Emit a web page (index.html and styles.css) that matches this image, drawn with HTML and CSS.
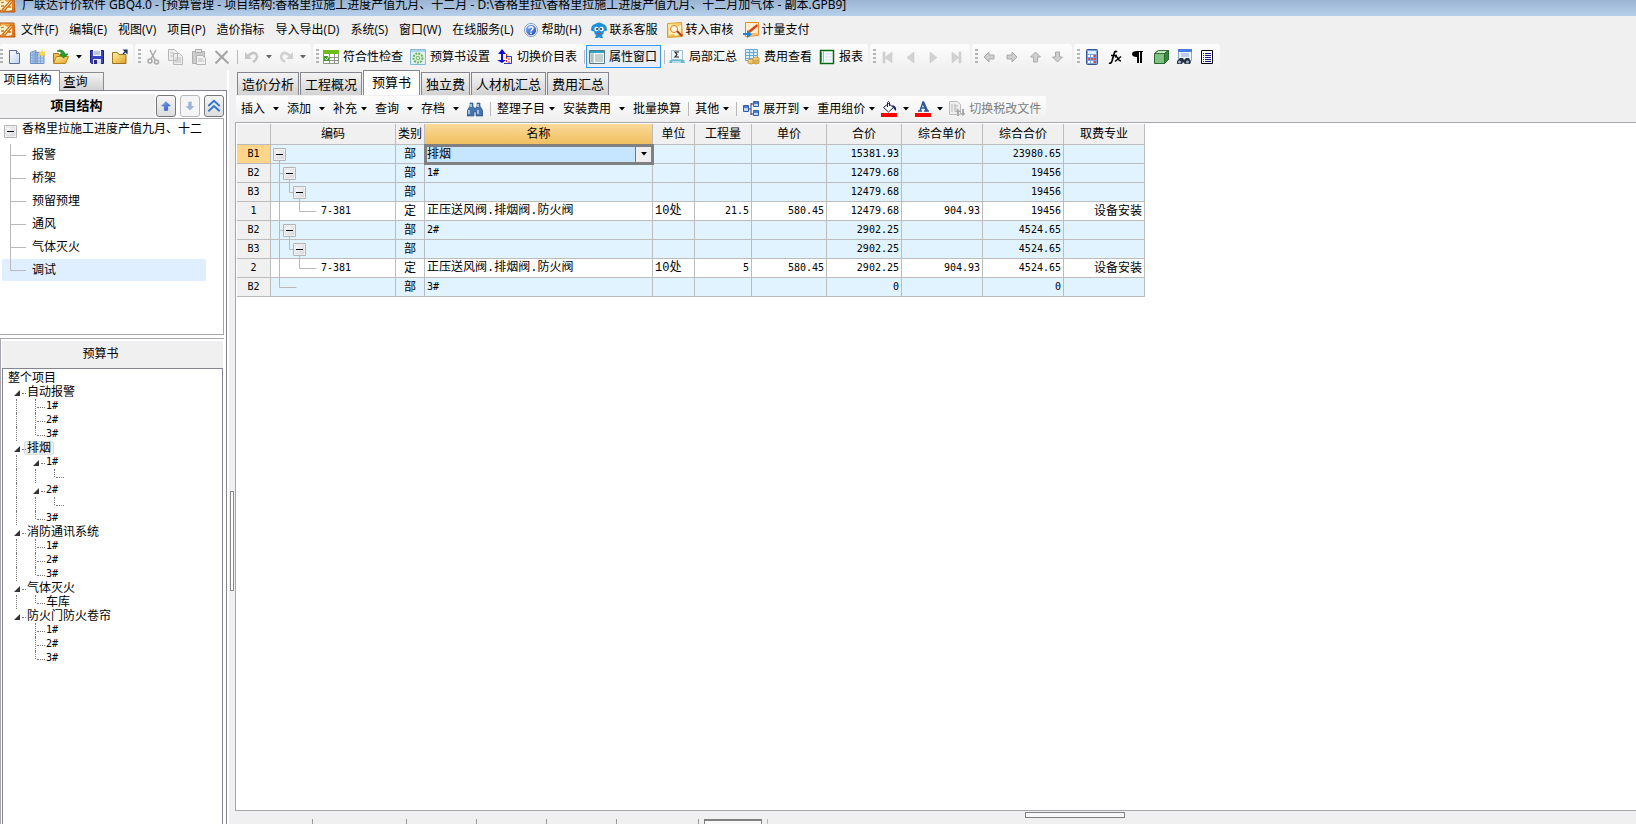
FILE: index.html
```
<!DOCTYPE html>
<html lang="zh-CN">
<head>
<meta charset="utf-8">
<title>广联达计价软件 GBQ4.0</title>
<link rel="stylesheet" href="styles.css">
</head>
<body>
<svg class="defs" aria-hidden="true">
  <linearGradient id="paper" x2="1" y2="1"><stop offset="0" stop-color="#fff"/><stop offset="1" stop-color="#bcd3ee"/></linearGradient>
  <linearGradient id="gold" y2="1"><stop offset="0" stop-color="#fff0a0"/><stop offset="1" stop-color="#e0a126"/></linearGradient>
  <linearGradient id="orange" x2="1" y2="1"><stop offset="0" stop-color="#f9c152"/><stop offset="1" stop-color="#d8640e"/></linearGradient>
  <linearGradient id="blue" y2="1"><stop offset="0" stop-color="#8db8f5"/><stop offset="1" stop-color="#1b47c0"/></linearGradient>
  <linearGradient id="silver" x2="1" y2="1"><stop offset="0" stop-color="#fff"/><stop offset="1" stop-color="#d5d5dc"/></linearGradient>
  <symbol id="app" viewBox="0 0 16 16"><path d="M0 1h14l1 14H0z" fill="url(#orange)" stroke="#c35a10"/><path d="M0 4l4-1 3 2 5-2v10l-5 1-3-2-4 1z" fill="#fff2cf"/><path d="M2 13L11 3l2 1-8 9M1 6l3-1M1 9h3M8 10h3" fill="none" stroke="#d07113" stroke-width="1.3"/></symbol>
  <symbol id="down" viewBox="0 0 6 4"><path d="M0 0h6L3 3.5z" fill="#000"/></symbol>
  <symbol id="downg" viewBox="0 0 6 4"><path d="M0 0h6L3 3.5z" fill="#666"/></symbol>
  <symbol id="box" viewBox="0 0 13 13"><path d="M.5 .5h12v12H.5z" fill="#fff" stroke="#b4b4b4"/><path d="M2 2h9v9H2z" fill="url(#silver)" stroke="#ddd"/><path d="M3 6.5h7" stroke="#000"/></symbol>
</svg>

<header class="titlebar">
  <svg class="icon"><use href="#app"/></svg>
  <span>广联达计价软件 GBQ4.0 - [预算管理 - 项目结构:香格里拉施工进度产值九月、十二月 - D:\香格里拉\香格里拉施工进度产值九月、十二月加气体 - 副本.GPB9]</span>
</header>

<nav class="menubar">
  <svg class="icon"><use href="#app"/></svg>
  <button>文件(F)</button><button>编辑(E)</button><button>视图(V)</button><button>项目(P)</button><button>造价指标</button><button>导入导出(D)</button><button>系统(S)</button><button>窗口(W)</button><button>在线服务(L)</button>
  <button class="with-icon"><svg class="icon" viewBox="0 0 16 16"><circle cx="8" cy="8" r="6.5" fill="#fff" stroke="#7c98c8"/><circle cx="8" cy="8" r="5.2" fill="url(#blue)"/><path d="M6 6.5C6 4 10 4 10 6.5 10 8 8 8 8 9.5M8 10.5v1.5" fill="none" stroke="#fff" stroke-width="1.5"/></svg>帮助(H)</button>
  <button class="with-icon"><svg class="icon" viewBox="0 0 16 16"><path d="M4 2Q8-1 12 2q4 1 4 6-1 2-3 1 0 3-2 4l1 3H9l-1-1-1 1H4l1-3q-2-1-2-4-2 1-3-1 0-5 4-6z" fill="#2091dc"/><circle cx="5.500" cy="7" r="2.200" fill="#fff"/><circle cx="10.500" cy="7" r="2.200" fill="#fff"/><circle cx="6" cy="7" r="1" fill="#123"/><circle cx="10" cy="7" r="1" fill="#123"/><path d="M6 11q2 2 4 0" stroke="#c33" fill="none"/></svg>联系客服</button>
  <button class="with-icon"><svg class="icon" viewBox="0 0 16 16"><path d="M.5 1.500l14-1 1 14-15 1z" fill="url(#gold)" stroke="#e0a030"/><path d="M2 4l4-1 3 2 5-2v9l-5 2-3-2-4 1z" fill="#fff0c0"/><circle cx="7" cy="7" r="3.500" fill="#fff8e0" stroke="#dc7b29"/><path d="M10 9l5 5" stroke="#b33a20" stroke-width="2"/></svg>转入审核</button>
  <button class="with-icon"><svg class="icon" viewBox="0 0 16 16"><path d="M2.500.5h13v13l-13 1z" fill="#fff0cc" stroke="#e58a25"/><path d="M5 9L14 2l1 2-8 7z" fill="#d9411d"/><path d="M8 12h6" stroke="#e58a25"/><path d="M0 11h4V8l5 4.500-5 3.500v-3H0z" fill="#1587d7"/></svg>计量支付</button>
</nav>

<div class="toolbars">
  <div class="group first">
    <i class="grip"></i>
    <button aria-label="新建"><svg class="icon" viewBox="0 0 16 16"><path d="M2.500 1.500h7l3 3v10h-10z" fill="url(#paper)" stroke="#5b6f92"/><path d="M9.500 1.500v3h3" fill="#dce8f7" stroke="#5b6f92"/></svg></button>
    <button aria-label="新建项目"><svg class="icon" viewBox="0 0 16 16"><path d="M.5 3.500L6 1.500v13H.5zM5 3.500h9v11H5z" fill="#b7d0ef" stroke="#6c91c4"/><path d="M1 6h13M1 9h13M1 12h13M7.500 4v10M10.500 4v10M3 3v11" stroke="#7ea4d4"/><path d="M12 0l1 3 3-1-2 2.500 2 2.500-3-1-1 3-1-3-3 1 2-2.500L8 2l3 1z" fill="#ffd83c"/></svg></button>
    <button aria-label="打开"><svg class="icon" viewBox="0 0 16 16"><path d="M.5 13.500v-9h5l1 2h6v7z" fill="#eebf4b" stroke="#a87516"/><path d="M.5 14.500l3-7h12l-3 7z" fill="url(#gold)" stroke="#b98618"/><path d="M4 2q6-3 8 3h3l-4.500 4L7 5h2q-1-3-5-3z" fill="#23a12b" stroke="#137018" stroke-width=".6"/></svg></button>
    <svg class="arrow"><use href="#down"/></svg>
    <button aria-label="保存"><svg class="icon" viewBox="0 0 16 16"><path d="M1.500 1.500h13v13h-12l-1-1z" fill="#3943bd" stroke="#1a1f78"/><path d="M4 1h8v6H4z" fill="#f2f4fa"/><path d="M5 3h6M5 5h6" stroke="#8e95b8"/><path d="M4 10h8v5H4z" fill="#dfe2ed"/><path d="M5 11h3v4H5z" fill="#262b80"/></svg></button>
    <button aria-label="关闭"><svg class="icon" viewBox="0 0 16 16"><path d="M.5 14.500v-11h5l1.500 2h7v9z" fill="url(#gold)" stroke="#9b7421"/><path d="M11 5l3-3M12 1h3v3z" fill="#17345c" stroke="#17345c" stroke-width="1.200"/></svg></button>
  </div>
  <div class="group">
    <i class="grip"></i>
    <button disabled aria-label="剪切"><svg class="icon" viewBox="0 0 16 16"><path d="M5 1l5 10M11 1L6 10" stroke="#aaa" stroke-width="1.500"/><g fill="none" stroke="#a8a8a8" stroke-width="1.500"><circle cx="5" cy="12" r="2"/><circle cx="11.500" cy="13" r="2"/></g></svg></button>
    <button disabled aria-label="复制"><svg class="icon" viewBox="0 0 16 16"><path d="M.5.5h6l3 3v8h-9zM5.500 4.500h6l3 3v8h-9z" fill="#eee" stroke="#b8b8b8"/><path d="M2 4h4M2 7h3M7 9h6M7 11h6M7 13h6" stroke="#c0c0c0"/></svg></button>
    <button disabled aria-label="粘贴"><svg class="icon" viewBox="0 0 16 16"><path d="M1.500 2.500h12v12h-12z" fill="#ccc" stroke="#b0b0b0"/><path d="M4.500.5h6v3h-6z" fill="#e8e8e8" stroke="#aaa"/><path d="M5.500 6.500h6l3 3v6h-9z" fill="#f3f3f3" stroke="#b4b4b4"/><path d="M7 10h5M7 12h6" stroke="#bbb"/></svg></button>
    <button disabled aria-label="删除"><svg class="icon" viewBox="0 0 16 16"><path d="M1.500 2l13 12.500M13.500 2L1.500 14.500" stroke="#a4a4a4" stroke-width="2"/></svg></button>
    <i class="sep"></i>
    <span class="split"><button disabled aria-label="撤销"><svg class="icon" viewBox="0 0 16 16"><path d="M3 7q5-5 8-2 3 4-3 8" fill="none" stroke="#c6c6c6" stroke-width="2.500"/><path d="M0 3v7h7z" fill="#c6c6c6"/></svg></button><svg class="arrow"><use href="#downg"/></svg></span>
    <span class="split"><button disabled aria-label="恢复"><svg class="icon" viewBox="0 0 16 16"><path d="M11 7Q6 2 3 5q-3 4 3 8" fill="none" stroke="#d0d0d0" stroke-width="2.500"/><path d="M14 3v7H7z" fill="#d0d0d0"/></svg></button><svg class="arrow"><use href="#downg"/></svg></span>
  </div>
  <div class="group">
    <i class="grip"></i>
    <button class="with-icon"><svg class="icon" viewBox="0 0 16 16"><path d="M.5 1.500h15v13H.5z" fill="#fff" stroke="#8b9a80"/><path d="M0 1h16v4H0z" fill="#6fbd19"/><path d="M0 8.500h16M0 11.500h16M6.500 5v10M11.500 5v10" stroke="#8a9385"/><path d="M1 7h5v5H1z" fill="#3e9b20"/><path d="M2 9l1.500 2L6 7" fill="none" stroke="#fff"/></svg>符合性检查</button>
    <button class="with-icon"><svg class="icon" viewBox="0 0 16 16"><path d="M.5.5h15v15H.5z" fill="#e3f1f6" stroke="#83b8d4"/><path d="M1 1h14v2H1z" fill="#a9d4e9"/><circle cx="8" cy="9" r="4.500" fill="#e7f5df" stroke="#6ab45a" stroke-width="2" stroke-dasharray="2 1"/><circle cx="8" cy="9" r="1.800" fill="#fff" stroke="#6ab45a"/></svg>预算书设置</button>
    <button class="with-icon"><svg class="icon" viewBox="0 0 16 16"><path d="M5 0l4 5H6v6h3l-4 3-5-3h4V5H1z" fill="#1010d0"/><path d="M9 7.500h5.500v7H7" fill="none" stroke="#2733ba"/><path d="M9.500 13V5M12 14V8" stroke="#d22" stroke-dasharray="2 1"/></svg>切换价目表</button>
    <i class="sep"></i>
    <button class="with-icon pressed"><svg class="icon" viewBox="0 0 16 16"><path d="M.5 1.500h15v13H.5z" fill="#f2f7fa" stroke="#59757e"/><path d="M1 2h14v2H1z" fill="#2ba5c9"/><path d="M1 4h4v10H1z" fill="#c5d9cd"/><path d="M2 6h2M2 8h2M2 10h2M2 12h2M6 6h8M6 8h8M6 10h8M6 12h8" stroke="#91aaa3"/></svg>属性窗口</button>
    <i class="sep short"></i>
    <button class="with-icon"><svg class="icon" viewBox="0 0 16 16"><path d="M2.500 1.500h11v9h-11z" fill="#ecf7fa" stroke="#a3c3ce"/><path d="M10 3H6l2 2.500L6 8h4" fill="none" stroke="#222" stroke-width="1.200"/><path d="M1 11h14l1 3H0z" fill="#65bbd1"/><path d="M3 13h9" stroke="#fff"/></svg>局部汇总</button>
    <button class="with-icon"><svg class="icon" viewBox="0 0 16 16"><path d="M1.500.5h12v11h-12z" fill="#d6edfa" stroke="#68a8d3"/><path d="M1 3.500h12M1 6.500h12M1 9.500h12M5.500 1v10M9.500 1v10" stroke="#68a8d3"/><path d="M4 11q3-2 6 0v3q-3 2-6 0zM9 9q3-2 6 0v5q-3 2-6 0z" fill="url(#gold)" stroke="#cda050"/><path d="M9 11q3 2 6 0" fill="none" stroke="#cda050"/></svg>费用查看</button>
    <button class="with-icon"><svg class="icon" viewBox="0 0 16 16"><path d="M1.500 1.500h13v13h-13z" fill="#f5faff" stroke="#08680f" stroke-width="1.500"/><path d="M4.500 2v12" stroke="#aac"/><path d="M6 5h7M6 8h7M6 11h7" stroke="#cddcf0"/><path d="M2 4h1M2 6h1M2 8h1M2 10h1M2 12h1" stroke="#222"/></svg>报表</button>
  </div>
  <div class="group">
    <i class="grip"></i>
    <button disabled aria-label="首条"><svg class="icon pale" viewBox="0 0 16 16"><path d="M3 3h2v11H3zM12 3v11L5 8.500z"/></svg></button>
    <button disabled aria-label="上一条"><svg class="icon pale" viewBox="0 0 16 16"><path d="M11 3v11L4 8.500z"/></svg></button>
    <button disabled aria-label="下一条"><svg class="icon pale" viewBox="0 0 16 16"><path d="M4 3v11l7-5.500z"/></svg></button>
    <button disabled aria-label="末条"><svg class="icon pale" viewBox="0 0 16 16"><path d="M3 3v11l7-5.500zM10 3h2v11h-2z"/></svg></button>
  </div>
  <div class="group">
    <i class="grip"></i>
    <button disabled aria-label="左移"><svg class="icon gray" viewBox="0 0 16 16"><path d="M2 8l5-5v3h5v4H7v3z"/></svg></button>
    <button disabled aria-label="右移"><svg class="icon gray" viewBox="0 0 16 16"><path d="M12 8L7 3v3H2v4h5v3z"/></svg></button>
    <button disabled aria-label="上移"><svg class="icon gray" viewBox="0 0 16 16"><path d="M7.500 3l5 5h-3v5h-4V8h-3z"/></svg></button>
    <button disabled aria-label="下移"><svg class="icon gray" viewBox="0 0 16 16"><path d="M6.500 13l5-5h-3V3h-4v5h-3z"/></svg></button>
  </div>
  <div class="group">
    <i class="grip"></i>
    <button aria-label="计算器"><svg class="icon" viewBox="0 0 16 16"><rect x="2.500" y=".5" width="11" height="15" rx="1" fill="#7ba4e3" stroke="#365292"/><path d="M4 2h8v3H4z" fill="#dfeffa"/><path d="M4 6h2v2H4zM7 6h2v2H7zM4 12h2v2H4zM7 12h2v2H7z" fill="#fff"/><path d="M10 6h2v2h-2zM4 9h2v2H4zM7 9h2v2H7zM10 9h2v2h-2zM10 12h2v2h-2z" fill="#d54c55"/></svg></button>
    <button aria-label="函数"><svg class="icon" viewBox="0 0 16 16"><path d="M10 3Q8 1 7 5L5 12q-1 3-3 2M4 6.500h6" fill="none" stroke="#000" stroke-width="1.700"/><path d="M8 8q2-1 3 1.500t3 2.500M14 7.500L8 12.500" fill="none" stroke="#000" stroke-width="1.500"/></svg></button>
    <button aria-label="段落"><svg class="icon" viewBox="0 0 16 16"><path d="M7 2h6v1h-1v11h-2V3H9v11H7V8Q2 8 2 5t5-3z" fill="#000"/></svg></button>
    <button aria-label="图元"><svg class="icon" viewBox="0 0 16 16"><path d="M1.500 4.500l4-3h10v9l-4 4h-10z" fill="#80c080" stroke="#276b31"/><path d="M1.500 4.500l4-3h10l-4 3z" fill="#c4e8bc" stroke="#39713b"/><path d="M11.500 4.500v10l4-4v-9z" fill="#388346" stroke="#276b31"/></svg></button>
    <button aria-label="查找表"><svg class="icon" viewBox="0 0 16 16"><path d="M2.500.5h13v11h-13z" fill="#eaf2ff" stroke="#8aa6de"/><path d="M2 0h14v3H2z" fill="#477de0"/><path d="M5 5h8M5 7h8" stroke="#8fa9dd"/><path d="M1 12l3-3h3l1 2 2-2h3l2 4-1 2H9l-2-2-1 2H1z" fill="#29323e"/><circle cx="3.500" cy="13" r="1.500" fill="#9db5d2"/><circle cx="11.500" cy="13" r="1.500" fill="#9db5d2"/></svg></button>
    <button aria-label="列表"><svg class="icon" viewBox="0 0 16 16"><path d="M2.500 1.500h11v13h-11z" fill="#fff" stroke="#000"/><path d="M4 4.500h1M6 4.500h6M4 6.500h1M6 6.500h6M4 8.500h1M6 8.500h6M4 10.500h1M6 10.500h6M4 12.500h1M6 12.500h6" stroke="#161b8e"/></svg></button>
  </div>
</div>

<div class="workspace">
  <aside class="side">
    <div class="side-tabs"><button class="side-tab active">项目结构</button><button class="side-tab"><u>查</u>询</button></div>
    <div class="side-body">
      <div class="side-head">
        <h2>项目结构</h2>
        <button aria-label="上移"><svg viewBox="0 0 16 16"><path d="M8 3l5 5h-3v5H6V8H3z" fill="url(#blue)" stroke="#315cc0" stroke-width=".6"/></svg></button>
        <button class="dim" aria-label="下移"><svg viewBox="0 0 16 16"><path d="M8 13l5-5h-3V3H6v5H3z" fill="#9eb4dc"/></svg></button>
        <button aria-label="折叠"><svg viewBox="0 0 16 16"><path d="M1.500 8L8 2l6.500 6M1.500 14L8 8l6.500 6" fill="none" stroke="#2c74cf" stroke-width="2"/></svg></button>
      </div>
      <ul class="project">
        <li class="root"><svg class="toggle"><use href="#box"/></svg>香格里拉施工进度产值九月、十二</li>
        <li>报警</li><li>桥架</li><li>预留预埋</li><li>通风</li><li>气体灭火</li><li class="selected">调试</li>
      </ul>
      <section class="book">
        <h3>预算书</h3>
        <div class="outline">
          <div class="node">整个项目</div>
          <div class="node"><i class="a"></i><b>自动报警</b></div>
          <div class="node"><i class="v"></i><i class="t"></i><b class="num">1#</b></div>
          <div class="node"><i class="v"></i><i class="t"></i><b class="num">2#</b></div>
          <div class="node"><i class="v"></i><i class="l"></i><b class="num">3#</b></div>
          <div class="node"><i class="a"></i><b class="current">排烟</b></div>
          <div class="node"><i class="v"></i><i class="a"></i><b class="num">1#</b></div>
          <div class="node"><i class="v"></i><i class="v"></i><i class="l"></i></div>
          <div class="node"><i class="v"></i><i class="a"></i><b class="num">2#</b></div>
          <div class="node"><i class="v"></i><i class="v"></i><i class="l"></i></div>
          <div class="node"><i class="v"></i><i class="l"></i><b class="num">3#</b></div>
          <div class="node"><i class="a"></i><b>消防通讯系统</b></div>
          <div class="node"><i class="v"></i><i class="t"></i><b class="num">1#</b></div>
          <div class="node"><i class="v"></i><i class="t"></i><b class="num">2#</b></div>
          <div class="node"><i class="v"></i><i class="l"></i><b class="num">3#</b></div>
          <div class="node"><i class="a"></i><b>气体灭火</b></div>
          <div class="node"><i class="v"></i><i class="l"></i><b>车库</b></div>
          <div class="node"><i class="a"></i><b>防火门防火卷帘</b></div>
          <div class="node"><i></i><i class="t"></i><b class="num">1#</b></div>
          <div class="node"><i></i><i class="t"></i><b class="num">2#</b></div>
          <div class="node"><i></i><i class="l"></i><b class="num">3#</b></div>
        </div>
      </section>
    </div>
  </aside>
  <div class="splitter"><span></span></div>

  <main class="main">
    <div class="tabs"><button>造价分析</button><button>工程概况</button><button class="active">预算书</button><button>独立费</button><button>人材机汇总</button><button>费用汇总</button></div>
    <div class="actions">
      <button class="wide">插入<svg class="arrow"><use href="#down"/></svg></button>
      <button class="wide">添加<svg class="arrow"><use href="#down"/></svg></button>
      <button>补充<svg class="arrow"><use href="#down"/></svg></button>
      <button class="wide">查询<svg class="arrow"><use href="#down"/></svg></button>
      <button class="wide">存档<svg class="arrow"><use href="#down"/></svg></button>
      <button aria-label="查找"><svg class="icon" viewBox="0 0 16 16"><path d="M3 2h3v3l1 2h2l1-2V2h3v3l3 5v5H9v-4H7v4H0v-5l3-5z" fill="#4473af" stroke="#254976" stroke-width=".6"/><path d="M2 9v4M11 9v4M4 3v3M11 3v3" stroke="#c4dcf4" stroke-width="1.500"/></svg></button>
      <i class="sep"></i>
      <button>整理子目<svg class="arrow"><use href="#down"/></svg></button>
      <button class="wide">安装费用<svg class="arrow"><use href="#down"/></svg></button>
      <button>批量换算</button>
      <i class="sep"></i>
      <button>其他<svg class="arrow"><use href="#down"/></svg></button>
      <i class="sep"></i>
      <button><svg class="icon" viewBox="0 0 16 16"><path d="M5 8h3M8 2v12M8 3h3M8 13h3" stroke="#336" fill="none"/><path d="M.5 4.500h5v6h-5zM10.500.5h5v5h-5zM10.500 9.500h5v5h-5z" fill="#bfd8f7" stroke="#2f5ba8"/><path d="M1 5h4v2H1zM11 1h4v2h-4zM11 10h4v2h-4z" fill="#4b80d0"/></svg>展开到<svg class="arrow"><use href="#down"/></svg></button>
      <button>重用组价<svg class="arrow"><use href="#down"/></svg></button>
      <button class="wide tool" aria-label="填充颜色"><svg class="icon" viewBox="0 0 16 16"><path d="M2.500 6.500l5-4 5 4-5 4.500z" fill="#fff" stroke="#18204c"/><path d="M6.500 6V1.500q1-2 2 0V5" fill="none" stroke="#192064"/><path d="M11 4q5 1 4 6l-2-2z" fill="#192064"/><path d="M0 12h16v4H0z" fill="#f00"/></svg><svg class="arrow"><use href="#down"/></svg></button>
      <button class="wide tool" aria-label="字体颜色"><svg class="icon" viewBox="0 0 16 16"><path d="M3 10h4M9 10h5M5 10L8 1l4 9M6 7h5" fill="none" stroke="#2e5596" stroke-width="1.500"/><path d="M8 1l4 9" stroke="#2e5596" stroke-width="2.500"/><path d="M0 12h16v4H0z" fill="#f00"/></svg><svg class="arrow"><use href="#down"/></svg></button>
      <button disabled class="tool"><svg class="icon" viewBox="0 0 16 16"><path d="M.5.5h8l3 3v10H.5z" fill="#eee" stroke="#bbb"/><path d="M3 3v8M5 5h4M5 8h4M6 3v8" stroke="#bbb"/><path d="M9 8l3 3h-2v4H8v-4H6zM14 15l-3-3h2V8h2v4h2z" fill="#aaa"/></svg>切换税改文件</button>
    </div>
    <div class="sheet">
      <table>
        <colgroup><col class="c34"><col class="c125"><col class="c29"><col class="c228"><col class="c42"><col class="c57"><col class="c75"><col class="c75"><col class="c81"><col class="c81"><col class="c81"></colgroup>
        <thead><tr><th></th><th>编码</th><th>类别</th><th class="hot">名称</th><th>单位</th><th>工程量</th><th>单价</th><th>合价</th><th>综合单价</th><th>综合合价</th><th>取费专业</th></tr></thead>
        <tbody>
          <tr><th class="hot">B1</th><td class="code"><svg viewBox="0 0 46 18"><path d="M8.500 15v3" stroke="#b9b9b9"/><use href="#box" x="2" y="3" width="13" height="13"/></svg></td><td class="kind">部</td><td class="editing"><div class="combo"><select aria-label="名称"><option>排烟</option></select><span><svg class="arrow"><use href="#down"/></svg></span></div></td><td></td><td></td><td></td><td>15381.93</td><td></td><td>23980.65</td><td></td></tr>
          <tr><th>B2</th><td class="code"><svg viewBox="0 0 46 18"><path d="M8.500 0v18M8 9.500h5M18.500 15v3" stroke="#b9b9b9"/><use href="#box" x="12" y="3" width="13" height="13"/></svg></td><td class="kind">部</td><td class="label">1#</td><td></td><td></td><td></td><td>12479.68</td><td></td><td>19456</td><td></td></tr>
          <tr><th>B3</th><td class="code"><svg viewBox="0 0 46 18"><path d="M8.500 0v18M18.500 0v9.500h5M28.500 15v3" fill="none" stroke="#b9b9b9"/><use href="#box" x="22" y="3" width="13" height="13"/></svg></td><td class="kind">部</td><td></td><td></td><td></td><td></td><td>12479.68</td><td></td><td>19456</td><td></td></tr>
          <tr class="item"><th>1</th><td class="code"><div><svg viewBox="0 0 46 18"><path d="M8.500 0v18M28.500 0v9.500h17" fill="none" stroke="#b9b9b9"/></svg>7-381</div></td><td class="kind">定</td><td class="name">正压送风阀.排烟阀.防火阀</td><td class="name">10处</td><td>21.5</td><td>580.45</td><td>12479.68</td><td>904.93</td><td>19456</td><td>设备安装</td></tr>
          <tr><th>B2</th><td class="code"><svg viewBox="0 0 46 18"><path d="M8.500 0v18M8 9.500h5M18.500 15v3" stroke="#b9b9b9"/><use href="#box" x="12" y="3" width="13" height="13"/></svg></td><td class="kind">部</td><td class="label">2#</td><td></td><td></td><td></td><td>2902.25</td><td></td><td>4524.65</td><td></td></tr>
          <tr><th>B3</th><td class="code"><svg viewBox="0 0 46 18"><path d="M8.500 0v18M18.500 0v9.500h5M28.500 15v3" fill="none" stroke="#b9b9b9"/><use href="#box" x="22" y="3" width="13" height="13"/></svg></td><td class="kind">部</td><td></td><td></td><td></td><td></td><td>2902.25</td><td></td><td>4524.65</td><td></td></tr>
          <tr class="item"><th>2</th><td class="code"><div><svg viewBox="0 0 46 18"><path d="M8.500 0v18M28.500 0v9.500h17" fill="none" stroke="#b9b9b9"/></svg>7-381</div></td><td class="kind">定</td><td class="name">正压送风阀.排烟阀.防火阀</td><td class="name">10处</td><td>5</td><td>580.45</td><td>2902.25</td><td>904.93</td><td>4524.65</td><td>设备安装</td></tr>
          <tr><th>B2</th><td class="code"><svg viewBox="0 0 46 18"><path d="M8.500 0v9.500h17" fill="none" stroke="#b9b9b9"/></svg></td><td class="kind">部</td><td class="label">3#</td><td></td><td></td><td></td><td>0</td><td></td><td>0</td><td></td></tr>
        </tbody>
      </table>
    </div>
    <div class="hsplit"><span></span></div>
    <div class="bottom-tabs"><button>工料机显示</button><button>查看单价构成</button><button>标准换算</button><button>换算信息</button><button>安装费用</button><button>工程量明细</button><button class="down" aria-label="说明"></button><i class="sep"></i></div>
  </main>
</div>
</body>
</html>
```
FILE: styles.css
```
* { box-sizing: border-box; }
html, body { height: 100%; }
body {
  margin: 0;
  display: flex;
  flex-direction: column;
  overflow: hidden;
  background: #f0f0f0;
  color: #000;
  font: 12px/16px "Open Sans", "Noto Sans CJK SC", sans-serif;
  white-space: nowrap;
}
button, select { font: inherit; color: inherit; border: 0; background: none; padding: 0; margin: 0; white-space: nowrap; }
ul, h2, h3 { margin: 0; padding: 0; list-style: none; }
svg { display: block; flex: none; }
i { font-style: normal; }
.defs { position: absolute; width: 0; height: 0; }
.icon { width: 16px; height: 16px; }
.arrow { width: 6px; height: 4px; }
.pale { fill: #d2d2d2; stroke: #c4c4c4; stroke-width: .5; }
.gray { fill: #cfcfcf; stroke: #aaa; }

.titlebar {
  display: flex;
  flex: none;
  gap: 6px;
  height: 16px;
  overflow: hidden;
  align-items: flex-end;
  padding-bottom: 3px;
  background: linear-gradient(#9ab4d1, #b6d0ec);
}
.titlebar span { font-family: "Noto Sans", "Noto Sans CJK SC", sans-serif; }
.menubar { display: flex; flex: none; align-items: center; height: 28px; gap: 11px; }
.menubar > .icon { margin-right: -6px; }
.with-icon { display: flex; align-items: center; gap: 4px; }
.menubar .with-icon { gap: 3px; margin-left: -2px; }

.toolbars { display: flex; flex: none; height: 26px; gap: 2px; }
.group {
  display: flex;
  align-items: center;
  gap: 7px;
  padding: 0 5px 1px 3px;
  background: linear-gradient(#fdfdfd, #f0f0f0);
  border-radius: 3px;
}
.group.first { padding-left: 0; }
.grip {
  width: 3px;
  height: 15px;
  margin-right: -3px;
  background: repeating-linear-gradient(#b4b4b4 0 2px, transparent 2px 4px);
}
.sep { width: 1px; height: 14px; background: #b8b8b8; }
.split { display: flex; align-items: center; gap: 5px; }
.pressed { height: 23px; margin: 0 -4px 0 -6px; padding: 0 3px 0 2px; border: 1px solid #3b93f2; background: #e6eef8; }
.sep.short { margin-right: -3px; }

.workspace { display: flex; flex: 1; min-height: 0; }
.side { display: flex; flex-direction: column; width: 227px; flex: none; }
.side-tabs { display: flex; align-items: flex-end; height: 20px; flex: none; }
.side-tab {
  width: 44px;
  height: 18px;
  padding-right: 12px;
  border: 1px solid #8b8b94;
  border-width: 1px 1px 0 0;
  background: linear-gradient(#f4f4f4, #d2d2d2);
}
.side-tab.active { width: 60px; height: 21px; padding: 0 4px 2px 0; margin-bottom: -1px; z-index: 1; background: #fff; }
.side-body {
  display: flex;
  flex-direction: column;
  flex: 1;
  min-height: 0;
  padding: 3px 2px 0 0;
  background: #fff;
  border: 1px solid #85858f;
  border-width: 1px 1px 0 0;
}
.side-head { display: flex; align-items: center; height: 24px; gap: 4px; flex: none; }
.side-head h2 { flex: 1; height: 24px; padding-right: 2px; font-size: 13px; line-height: 22px; font-weight: bold; text-align: center; background: #f0f0f0; }
.side-head button {
  width: 20px;
  height: 22px;
  display: flex;
  align-items: center;
  justify-content: center;
  border: 1px solid #777;
  border-radius: 3px;
  background: linear-gradient(#f5f5f5, #ddd);
}
.side-head button svg { width: 14px; height: 14px; }
.side-head h2 + button { margin-left: -3px; }
.side-head .dim { border-color: #b8b8b8; background: #f5f5f5; }
.project { flex: none; height: 217px; border: 1px solid #a6a6ae; border-left: 0; }
.project li { display: flex; align-items: center; height: 22px; margin: 0 17px 1px 2px; padding-left: 8px; }
.project li::before {
  content: "";
  width: 16px;
  height: 23px;
  margin-right: 6px;
  background: linear-gradient(#b9b9b9, #b9b9b9) 0 11px / 16px 1px no-repeat, linear-gradient(#b9b9b9, #b9b9b9) 0 0 / 1px 23px no-repeat;
}
.project li.root { height: 25px; margin-bottom: 0; margin-right: 0; padding: 0 0 6px 2px; gap: 5px; }
.project li.root::before { display: none; }
.project li.selected { background: linear-gradient(#e0efff, #e0efff); }
.project li.selected::before { height: 22px; background: linear-gradient(#b9b9b9, #b9b9b9) 0 11px / 16px 1px no-repeat, linear-gradient(#b9b9b9, #b9b9b9) 0 0 / 1px 11px no-repeat; }
.toggle { width: 13px; height: 13px; margin-top: 6px; }
.book { display: flex; flex-direction: column; flex: 1; min-height: 0; margin-top: 3px; padding: 2px 1px 0 1px; border: 1px solid #a6a6ae; border-width: 1px 0 0 1px; }
.book h3 { height: 27px; padding-right: 24px; font-weight: normal; font-size: 12px; line-height: 26px; text-align: center; background: #f0f0f0; flex: none; }
.outline { flex: 1; min-height: 0; overflow: hidden; padding: 2px 0 0 4px; border: 1px solid #85858f; border-bottom: 0; }
.node { display: flex; height: 14px; padding-left: 1px; line-height: 14px; align-items: center; font-family: "DejaVu Sans Mono", "Noto Sans CJK SC", monospace; }
.node b { font-weight: normal; padding-right: 2px; }
.node b.num { font-size: 10px; }
.node b.current { margin-left: -3px; padding: 0 3px; background: #eee; border-radius: 3px; box-shadow: inset 0 0 0 1px #ddd; }
.node i { position: relative; width: 19px; height: 14px; flex: none; }
.node .v::before, .node .t::before, .node .l::before { content: ""; position: absolute; left: 8px; top: 0; height: 14px; border-left: 1px dotted #777; }
.node .l::before { height: 8px; }
.node .t::after, .node .l::after { content: ""; position: absolute; left: 10px; top: 8px; width: 8px; border-top: 1px dotted #777; }
.node .a::before { content: ""; position: absolute; left: 6px; top: 5px; border: 3px solid #333; border-top-color: transparent; border-left-color: transparent; }
.node .a::after { content: ""; position: absolute; left: 14px; top: 8px; width: 4px; border-top: 1px dotted #777; }

.splitter { display: flex; align-items: center; width: 8px; flex: none; padding-left: 1px; border-left: 2px solid #fff; }
.splitter span { width: 4px; height: 100px; margin-top: 188px; background: #fff; border: 1px solid #888; }

.main { display: flex; flex-direction: column; flex: 1; min-width: 0; }
.tabs { display: flex; align-items: flex-end; height: 25px; flex: none; padding-left: 2px; gap: 1px; font-size: 13px; }
.tabs button { height: 23px; padding: 0 4px; border: 1px solid #85858f; border-bottom: 0; background: linear-gradient(#f4f4f4, #d2d2d2); }
.tabs .active { height: 25px; padding: 0 8px 2px 8px; background: #fff; }
.actions {
  display: flex;
  align-items: center;
  align-self: flex-start;
  flex: none;
  height: 24px;
  margin: 1px 0 2px 1px;
  padding: 2px 5px 0;
  gap: 8px;
  background: linear-gradient(#fdfdfd, #f0f0f0);
}
.actions button { display: flex; align-items: center; gap: 4px; }
.actions .wide { gap: 8px; }
.actions .sep { margin: 0 -2px 0 -1px; }
.actions .tool { gap: 6px; margin-left: -2px; }
.actions button:disabled { color: #7d7d7d; gap: 4px; }

.sheet { flex: 1; min-height: 0; overflow: hidden; padding: 1px 0 0 1px; background: #fff; border: 1px solid #a6a6ae; border-right: 0; }
table { width: 908px; table-layout: fixed; border-spacing: 0; font-family: "DejaVu Sans Mono", "Noto Sans CJK SC", monospace; }
.c34 { width: 34px; } .c125 { width: 125px; } .c29 { width: 29px; } .c228 { width: 228px; } .c42 { width: 42px; }
.c57 { width: 57px; } .c75 { width: 75px; } .c81 { width: 81px; }
th, td { height: 19px; padding: 0; line-height: 18px; border: 1px solid #bcbcbc; border-width: 0 1px 1px 0; overflow: hidden; }
th { font-weight: normal; background: #f0f0f0; font-size: 10px; }
thead th { height: 21px; line-height: 20px; font-size: 12px; }
.hot { background: #ffd58a; }
thead .hot { background: linear-gradient(#fbd99a, #f0c060); }
td { background: #e1f3ff; text-align: right; padding-right: 2px; font-size: 10px; }
.item td { background: #fff; }
td:last-child, td.kind, td.name { font-size: 12px; }
td.kind { text-align: center; padding: 0; }
td.label { text-align: left; padding-left: 2px; }
td.name { text-align: left; padding-left: 2px; font-family: "Liberation Mono", "Noto Sans CJK SC", monospace; }
td.code { padding: 0; text-align: left; }
.code svg { width: 46px; height: 18px; }
.code div { display: flex; gap: 4px; }
td.editing { padding: 0; outline: 3px solid #808080; outline-offset: -2px; font-size: 12px; }
.combo { display: flex; height: 18px; background: #c6e5ff; }
.combo select { flex: 1; appearance: none; padding-left: 2px; font-size: 12px; line-height: 18px; }
.combo span { display: flex; align-items: center; justify-content: center; width: 17px; border-left: 1px solid #777; background: #eee; }

.hsplit { height: 8px; flex: none; padding-top: 1px; }
.hsplit span { display: block; width: 100px; height: 6px; margin-left: 56.400%; border: 1px solid #808080; background: #f8f8f8; }
.bottom-tabs { display: flex; height: 5px; flex: none; overflow: hidden; align-items: flex-start; }
.bottom-tabs button { height: 22px; padding: 3px 10px 0 11px; border-right: 1px solid #999; }
.bottom-tabs button:first-child { padding: 3px 8px 0 9px; }
.bottom-tabs .down { width: 58px; margin: 0 5px; border: 1px solid #808080; border-top-width: 2px; background: #f8f8f8; }
```
